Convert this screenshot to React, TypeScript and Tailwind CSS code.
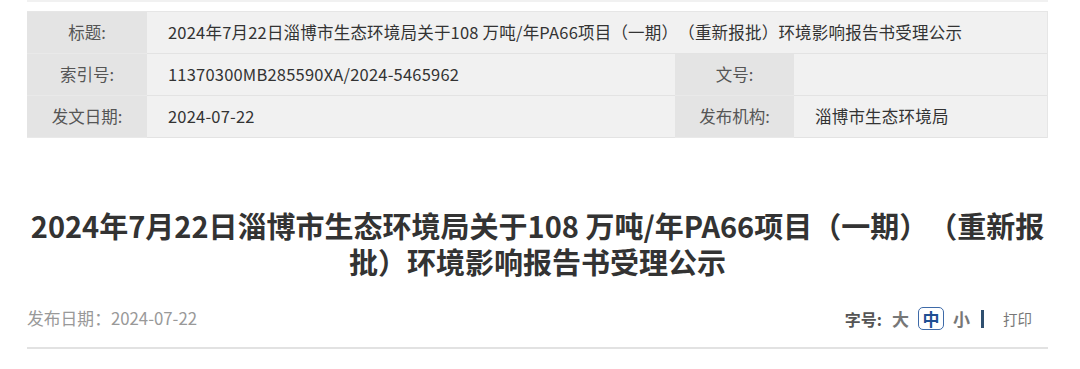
import React from "react";

const font = { fontFamily: '"Noto Sans CJK SC", "Noto Sans", sans-serif' };

function Label({ children }: { children: React.ReactNode }) {
  return (
    <div className="flex items-center justify-center bg-[#e4e4e4] text-[#555] text-[16.5px] border-b border-[#e9e9e9]">
      {children}
    </div>
  );
}

function Value({ children, span }: { children?: React.ReactNode; span?: boolean }) {
  return (
    <div
      className={`flex items-center bg-[#f1f1f1] text-[#333] text-[16.5px] tracking-[0.2px] pl-[21px] border-b border-[#e3e3e3] [text-spacing-trim:space-all] ${
        span ? "col-span-3" : ""
      }`}
    >
      {children}
    </div>
  );
}

export default function App() {
  return (
    <div className="w-[1080px] h-[369px] bg-white overflow-hidden" style={font}>
      <div className="ml-[27px] w-[1021px]">
        <div className="h-[2px] bg-[#f1f1f1]" />
        <div className="mt-[9px] grid grid-cols-[120px_528px_119px_1fr] auto-rows-[42px] border-t border-r border-[#e6e6e6]">
          <Label>标题:</Label>
          <Value span>2024年7月22日淄博市生态环境局关于108 万吨/年PA66项目（一期）（重新报批）环境影响报告书受理公示</Value>
          <Label>索引号:</Label>
          <Value>11370300MB285590XA/2024-5465962</Value>
          <Label>文号:</Label>
          <Value />
          <Label>发文日期:</Label>
          <Value>2024-07-22</Value>
          <Label>发布机构:</Label>
          <Value>淄博市生态环境局</Value>
        </div>

        <h1 className="mt-[69px] text-center text-[29px] font-bold leading-[36px] text-[#333] [text-spacing-trim:space-all]">
          2024年7月22日淄博市生态环境局关于108 万吨/年PA66项目（一期）（重新报批）环境影响报告书受理公示
        </h1>

        <div className="mt-[27px] flex items-center justify-between pb-[15px] border-b-2 border-[#e2e2e2]">
          <span className="text-[16.8px] text-[#999]">发布日期：2024-07-22</span>
          <div className="flex items-center text-[#777] pr-[16px]">
            <span className="text-[16px] font-bold text-[#555]">字号:</span>
            <span className="ml-[10px] text-[17px] font-bold text-[#777]">大</span>
            <span className="ml-[9px] flex items-center justify-center w-[26px] h-[23px] rounded-[5px] border border-[#3e6aa8] text-[17px] font-bold text-[#1f4f93]">
              中
            </span>
            <span className="ml-[9px] text-[17px] font-bold text-[#777]">小</span>
            <span className="ml-[11px] w-[3px] h-[18px] bg-[#2f4f6f]" />
            <span className="ml-[19px] text-[14.5px] text-[#777]">打印</span>
          </div>
        </div>
      </div>
    </div>
  );
}
